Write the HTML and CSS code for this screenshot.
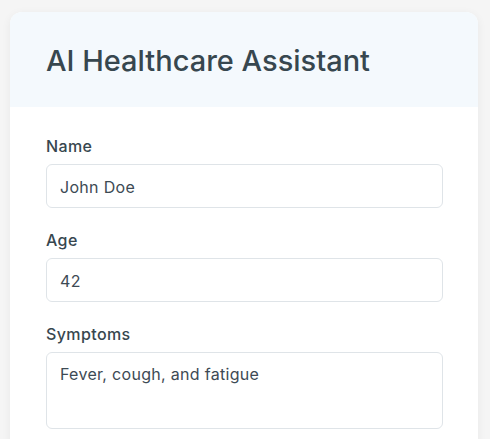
FILE: index.html
```html
<!DOCTYPE html>
<html lang="en">
<head>
<meta charset="utf-8">
<title>AI Healthcare Assistant</title>
<link rel="stylesheet" href="styles.css">
</head>
<body>
<main class="card">
  <header class="card-header">
    <h1 class="title">AI Healthcare Assistant</h1>
  </header>
  <form class="card-body">
    <div class="field">
      <label class="label" for="name">Name</label>
      <input class="input" id="name" type="text" value="John Doe">
    </div>
    <div class="field">
      <label class="label" for="age">Age</label>
      <input class="input" id="age" type="text" value="42">
    </div>
    <div class="field">
      <label class="label" for="symptoms">Symptoms</label>
      <textarea class="input textarea" id="symptoms">Fever, cough, and fatigue</textarea>
    </div>
  </form>
</main>
</body>
</html>
```

FILE: styles.css
```css
* { box-sizing: border-box; }

html, body {
  margin: 0;
  padding: 0;
  background: #f5f5f5;
  font-family: Inter, "Noto Sans", sans-serif;
  overflow: hidden;
}

body {
  padding: 12px 12px 0 10px;
}

.card {
  width: 468px;
  background: #ffffff;
  border-radius: 12px;
  overflow: hidden;
  box-shadow: 0 2px 10px rgba(0, 0, 0, 0.06);
}

.card-header {
  background: #f4f9fd;
  padding: 32px 36px 29px;
}

.title {
  margin: 0;
  font-size: 29px;
  line-height: 34px;
  font-weight: 500;
  letter-spacing: 0;
  color: #37474f;
}

.card-body {
  padding: 29px 35px 24px 36px;
}

.field {
  margin-bottom: 22px;
}

.label {
  display: block;
  margin-bottom: 8px;
  font-size: 16px;
  font-weight: 500;
  letter-spacing: 0.4px;
  color: #37474f;
}

.input {
  display: block;
  width: 100%;
  height: 44px;
  padding: 2px 13px 0;
  border: 1px solid #dfe4e8;
  border-radius: 6px;
  background: #ffffff;
  font-family: Inter, "Noto Sans", sans-serif;
  font-size: 16px;
  letter-spacing: 0.3px;
  color: #3d4a54;
  outline: none;
}

.textarea {
  height: 77px;
  padding: 11px 13px;
  resize: none;
  line-height: normal;
}
```
